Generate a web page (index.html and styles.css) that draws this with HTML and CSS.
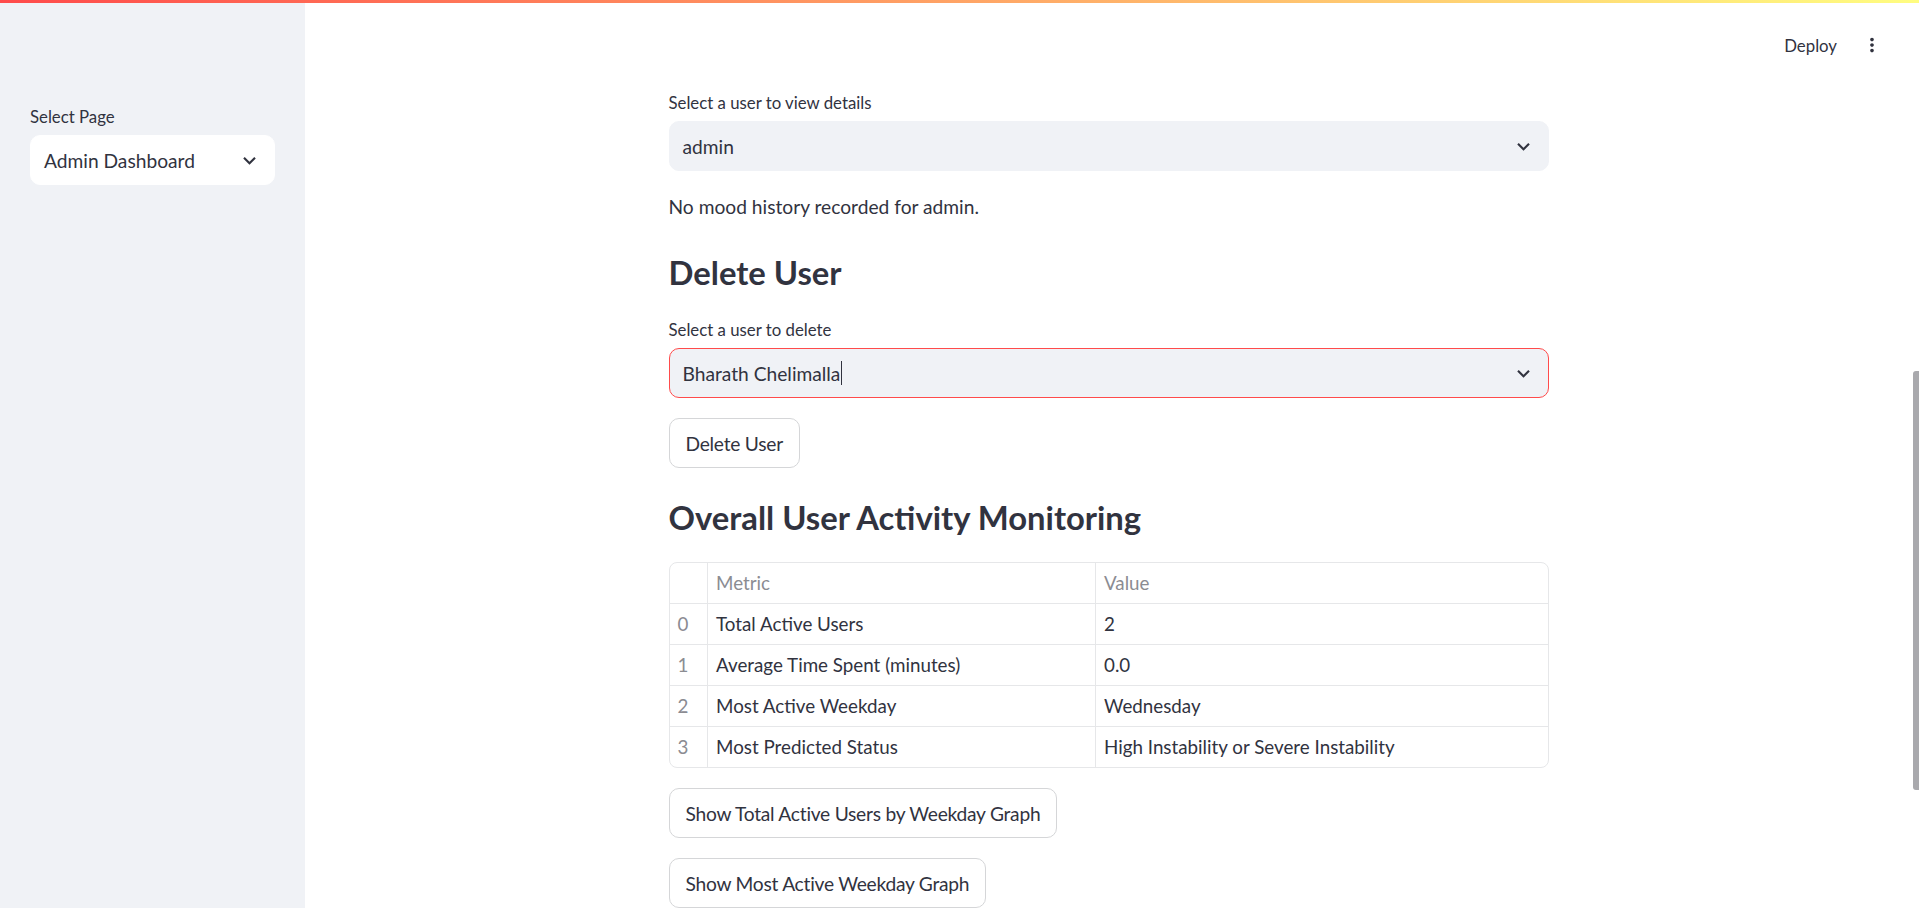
FILE: index.html
```html
<!DOCTYPE html>
<html lang="en">
<head>
<meta charset="utf-8">
<title>Admin Dashboard</title>
<link rel="stylesheet" href="styles.css">
</head>
<body>
<div class="decoration"></div>
<div class="app">
  <aside class="sidebar">
    <div class="widget">
      <div class="widget-label">Select Page</div>
      <div class="select select-white">
        <span class="select-value">Admin Dashboard</span>
        <svg class="chevron" viewBox="0 0 24 24"><path d="M16.59 8.59L12 13.17 7.41 8.59 6 10l6 6 6-6z"/></svg>
      </div>
    </div>
  </aside>
  <main class="main">
    <header class="header">
      <span class="deploy">Deploy</span>
      <svg class="kebab" viewBox="0 0 24 24"><path d="M12 8c1.1 0 2-.9 2-2s-.9-2-2-2-2 .9-2 2 .9 2 2 2zm0 2c-1.1 0-2 .9-2 2s.9 2 2 2 2-.9 2-2-.9-2-2-2zm0 6c-1.1 0-2 .9-2 2s.9 2 2 2 2-.9 2-2-.9-2-2-2z"/></svg>
    </header>
    <div class="content">
      <div class="block">
        <div class="widget">
          <div class="widget-label">Select a user to view details</div>
          <div class="select">
            <span class="select-value">admin</span>
            <svg class="chevron" viewBox="0 0 24 24"><path d="M16.59 8.59L12 13.17 7.41 8.59 6 10l6 6 6-6z"/></svg>
          </div>
        </div>
        <p class="text">No mood history recorded for admin.</p>
        <h3 class="heading">Delete User</h3>
        <div class="widget">
          <div class="widget-label">Select a user to delete</div>
          <div class="select select-focus">
            <span class="select-value">Bharath Chelimalla<span class="caret"></span></span>
            <svg class="chevron" viewBox="0 0 24 24"><path d="M16.59 8.59L12 13.17 7.41 8.59 6 10l6 6 6-6z"/></svg>
          </div>
        </div>
        <div><button class="btn">Delete User</button></div>
        <h3 class="heading">Overall User Activity Monitoring</h3>
        <div class="table-wrap">
          <table class="df">
            <thead>
              <tr><th class="idx"></th><th class="col-metric">Metric</th><th>Value</th></tr>
            </thead>
            <tbody>
              <tr><td class="idx">0</td><td>Total Active Users</td><td>2</td></tr>
              <tr><td class="idx">1</td><td>Average Time Spent (minutes)</td><td>0.0</td></tr>
              <tr><td class="idx">2</td><td>Most Active Weekday</td><td>Wednesday</td></tr>
              <tr><td class="idx">3</td><td>Most Predicted Status</td><td>High Instability or Severe Instability</td></tr>
            </tbody>
          </table>
        </div>
        <div><button class="btn">Show Total Active Users by Weekday Graph</button></div>
        <div><button class="btn">Show Most Active Weekday Graph</button></div>
      </div>
    </div>
    <div class="scroll-thumb"></div>
  </main>
</div>
</body>
</html>
```
FILE: styles.css
```css
* { box-sizing: border-box; }
html, body {
  margin: 0;
  padding: 0;
  height: 100%;
  overflow: hidden;
  background: #ffffff;
}
body {
  font-family: Lato, "Noto Sans", "Liberation Sans", sans-serif;
  color: #31333f;
  font-size: 19.2px;
}
.decoration {
  position: fixed;
  top: 0;
  left: 0;
  right: 0;
  height: 3px;
  background: linear-gradient(90deg, #ff4b4b, #fffd80);
  z-index: 10;
}
.app {
  display: flex;
  height: 908px;
}
.sidebar {
  width: 305px;
  flex: none;
  background: #f0f2f6;
  padding: 104px 30px 0 30px;
}
.main {
  flex: 1;
  position: relative;
  display: flex;
  flex-direction: column;
}
.header {
  height: 75px;
  padding: 15px 36px 0 0;
  display: flex;
  align-items: center;
  justify-content: flex-end;
  gap: 24px;
}
.deploy {
  font-size: 16.8px;
  color: #31333f;
}
.kebab {
  width: 22px;
  height: 22px;
  fill: #31333f;
}
.content {
  padding: 15px 7px 0 0;
}
.block {
  width: 880px;
  margin: 0 auto;
  display: flex;
  flex-direction: column;
  gap: 20px;
}
.widget-label {
  font-size: 16.8px;
  line-height: 25px;
  height: 25px;
  margin-bottom: 6px;
}
.select {
  height: 50px;
  border-radius: 10px;
  background: #f0f2f6;
  border: 1px solid #f0f2f6;
  display: flex;
  align-items: center;
  justify-content: space-between;
  padding: 0 12px 0 13px;
}
.select-white {
  background: #ffffff;
  border-color: #ffffff;
}
.select-focus {
  border-color: #ff4b4b;
}
.select-value {
  font-size: 19.2px;
  display: flex;
  align-items: center;
}
.caret {
  display: inline-block;
  width: 1px;
  height: 24px;
  background: #31333f;
  margin-left: 1px;
}
.chevron {
  width: 25px;
  height: 25px;
  fill: #31333f;
}
.text {
  margin: 0;
  font-size: 19.2px;
  line-height: 32px;
}
.heading {
  margin: 0;
  padding: 9px 0 3px 0;
  font-size: 32.8px;
  line-height: 42px;
  font-weight: 700;
}
.btn {
  font-family: inherit;
  font-size: 19.2px;
  letter-spacing: -0.25px;
  color: #31333f;
  background: #ffffff;
  border: 1px solid #d5d6d8;
  border-radius: 10px;
  height: 50px;
  padding: 0 16px;
  cursor: pointer;
}
.table-wrap {
  border: 1px solid #e6e7e9;
  border-radius: 8px;
  overflow: hidden;
}
.df {
  width: 100%;
  border-collapse: collapse;
  font-size: 18.8px;
}
.df th, .df td {
  text-align: left;
  padding: 0 0 0 8px;
  border-right: 1px solid #e6e7e9;
  border-bottom: 1px solid #e6e7e9;
  font-weight: 400;
  white-space: nowrap;
}
.df th:last-child, .df td:last-child { border-right: none; }
.df tbody tr:last-child td { border-bottom: none; }
.df th {
  height: 40px;
  color: #8b8c92;
}
.df td {
  height: 41px;
}
.df .idx {
  width: 38px;
  color: #8b8c92;
}
.df .col-metric {
  width: 388px;
}
.scroll-thumb {
  position: absolute;
  right: 0;
  top: 371px;
  width: 6px;
  height: 419px;
  background: #a9a9ad;
  border-radius: 3px 0 0 3px;
}
```
